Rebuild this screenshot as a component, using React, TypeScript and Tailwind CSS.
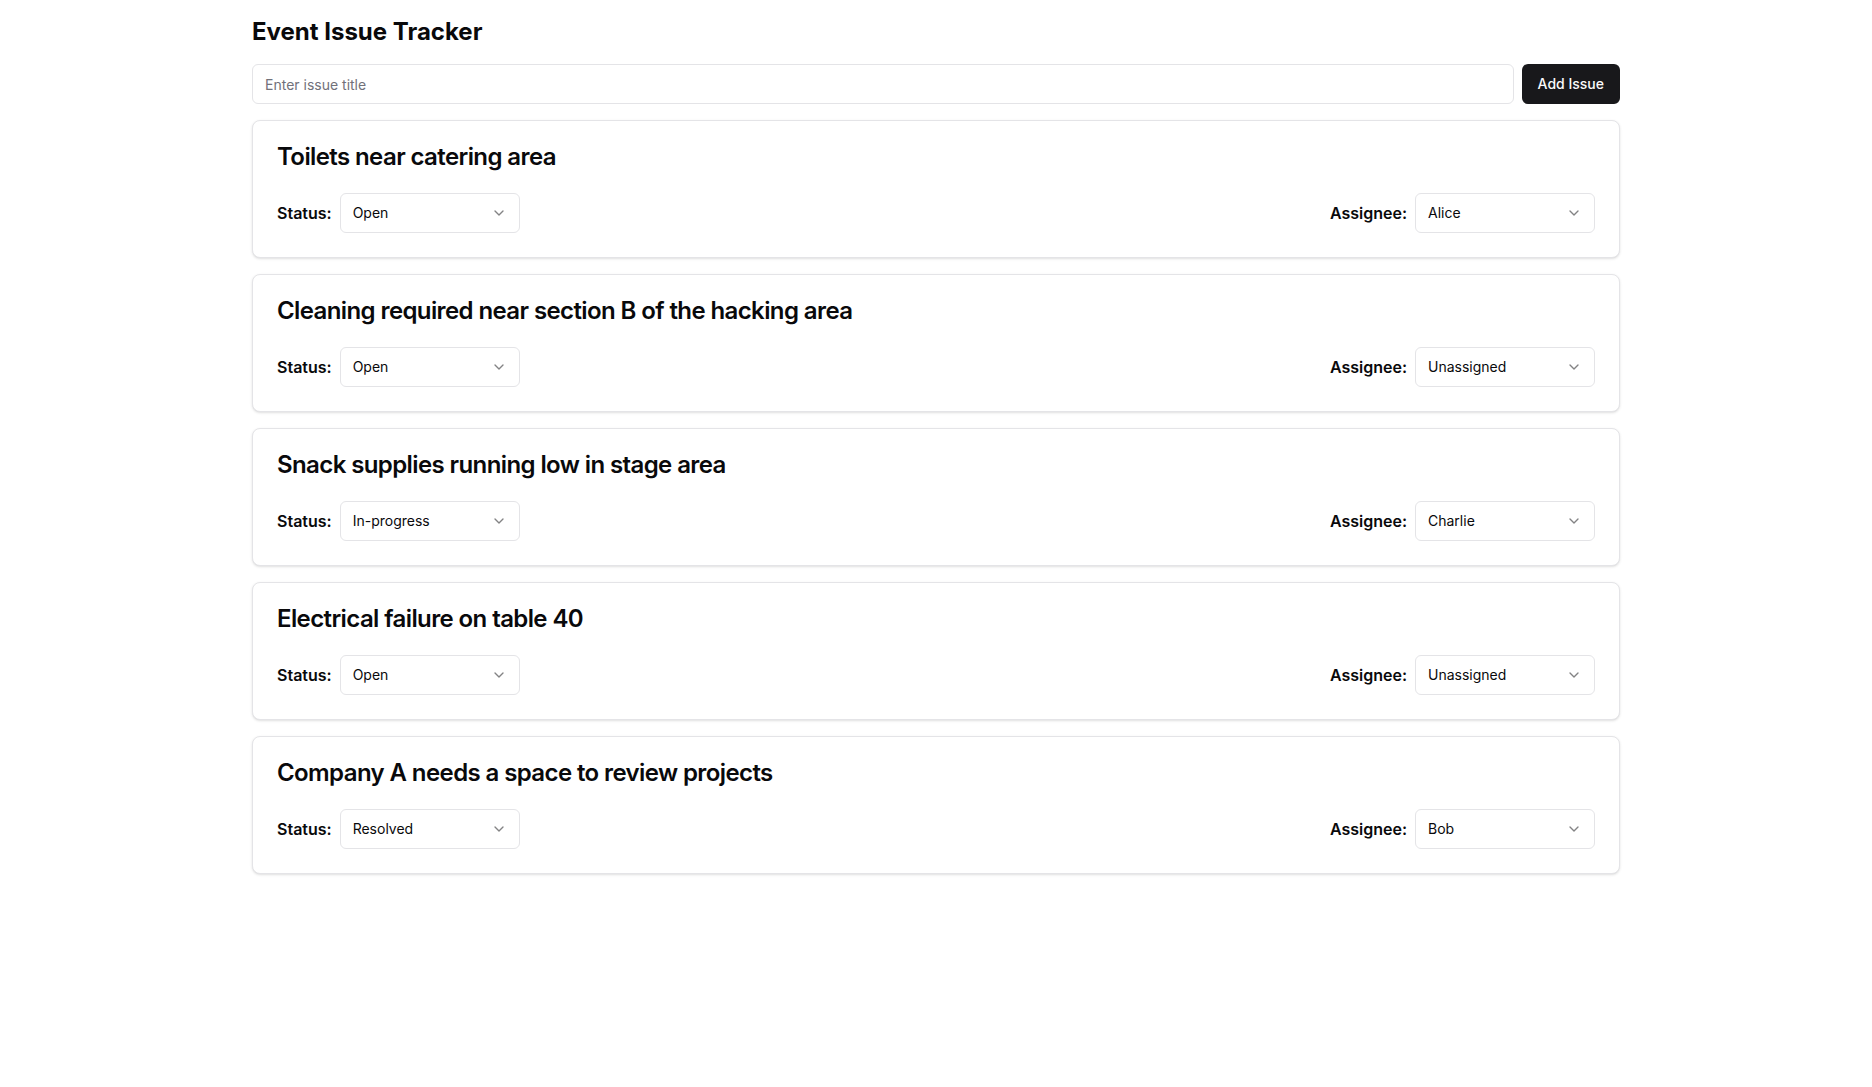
import { useState } from "react";
import { ChevronDown } from "lucide-react";

type Issue = {
  id: number;
  title: string;
  status: string;
  assignee: string;
};

const INITIAL_ISSUES: Issue[] = [
  { id: 1, title: "Toilets near catering area", status: "Open", assignee: "Alice" },
  { id: 2, title: "Cleaning required near section B of the hacking area", status: "Open", assignee: "Unassigned" },
  { id: 3, title: "Snack supplies running low in stage area", status: "In-progress", assignee: "Charlie" },
  { id: 4, title: "Electrical failure on table 40", status: "Open", assignee: "Unassigned" },
  { id: 5, title: "Company A needs a space to review projects", status: "Resolved", assignee: "Bob" },
];

function SelectTrigger({ value }: { value: string }) {
  return (
    <button
      type="button"
      className="flex h-10 w-[180px] items-center justify-between rounded-md border border-[#e4e4e7] bg-white px-3 py-2 text-sm text-[#09090b]"
    >
      <span>{value}</span>
      <ChevronDown className="h-4 w-4 opacity-50" />
    </button>
  );
}

export default function App() {
  const [issues, setIssues] = useState<Issue[]>(INITIAL_ISSUES);
  const [title, setTitle] = useState("");

  const addIssue = () => {
    if (!title.trim()) return;
    setIssues([
      ...issues,
      { id: Date.now(), title: title.trim(), status: "Open", assignee: "Unassigned" },
    ]);
    setTitle("");
  };

  return (
    <div className="min-h-screen bg-white font-['Inter',sans-serif] text-[#09090b]">
      <div className="mx-auto max-w-[1368px] pt-4">
        <h1 className="mb-4 text-2xl font-bold">Event Issue Tracker</h1>

        <div className="mb-4 flex gap-2">
          <input
            value={title}
            onChange={(e) => setTitle(e.target.value)}
            placeholder="Enter issue title"
            className="h-10 flex-1 rounded-md border border-[#e4e4e7] bg-white px-3 py-2 text-sm outline-none placeholder:text-[#71717a]"
          />
          <button
            onClick={addIssue}
            className="h-10 rounded-md bg-[#18181b] px-4 text-sm font-medium text-[#fafafa]"
          >
            Add Issue
          </button>
        </div>

        <div className="space-y-4">
          {issues.map((issue) => (
            <div
              key={issue.id}
              className="rounded-lg border border-[#e4e4e7] bg-white p-6 shadow-sm"
            >
              <h3 className="mb-6 text-2xl font-semibold leading-none tracking-tight">
                {issue.title}
              </h3>
              <div className="flex items-center justify-between">
                <div className="flex items-center gap-2">
                  <span className="font-semibold">Status:</span>
                  <SelectTrigger value={issue.status} />
                </div>
                <div className="flex items-center gap-2">
                  <span className="font-semibold">Assignee:</span>
                  <SelectTrigger value={issue.assignee} />
                </div>
              </div>
            </div>
          ))}
        </div>
      </div>
    </div>
  );
}
